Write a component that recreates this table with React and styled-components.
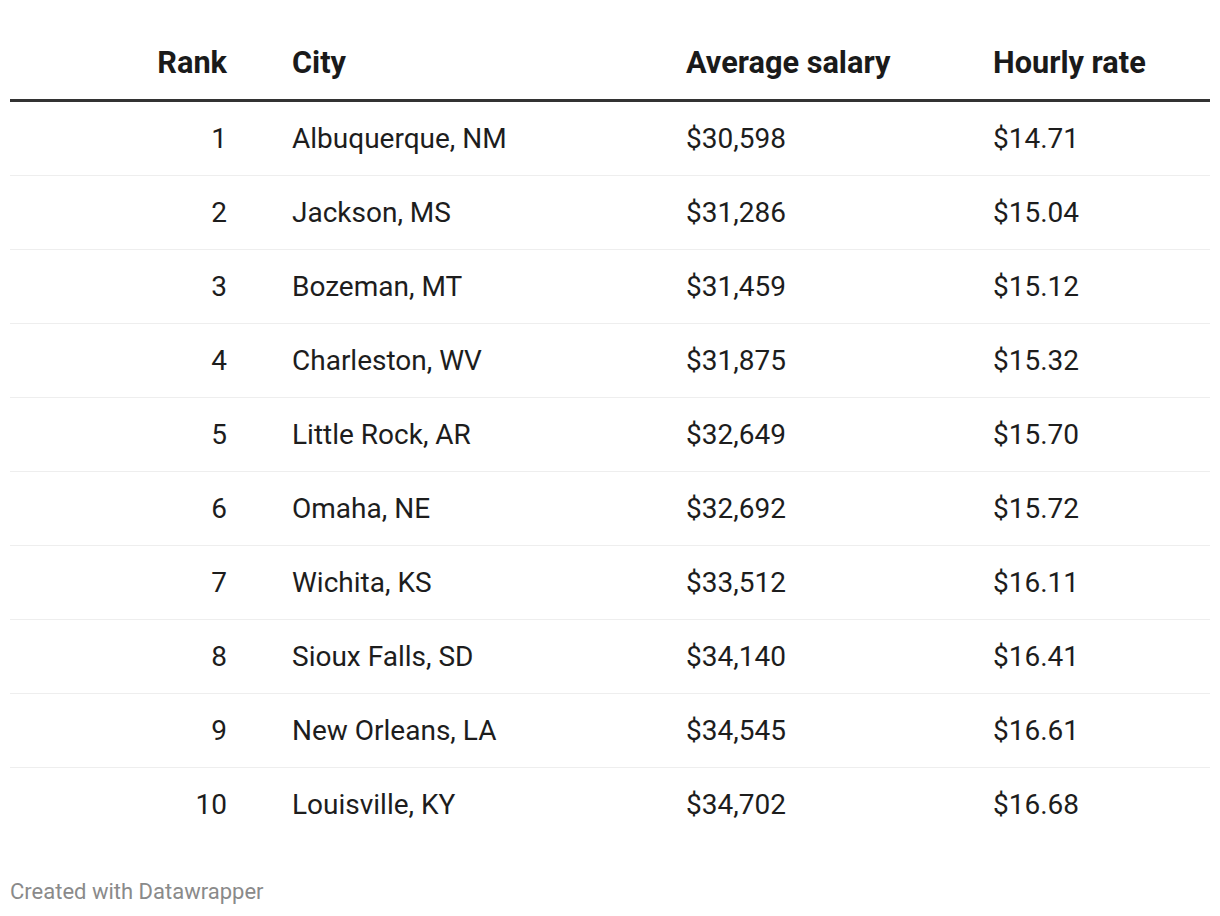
import React from 'react'
import styled, { createGlobalStyle } from 'styled-components'

const GlobalStyle = createGlobalStyle`
  html, body {
    margin: 0;
    padding: 0;
    background: #ffffff;
  }
  body {
    font-family: Roboto, 'Liberation Sans', Arial, sans-serif;
    color: #1d1d1d;
  }
`

const rows = [
  { rank: 1, city: 'Albuquerque, NM', salary: '$30,598', hourly: '$14.71' },
  { rank: 2, city: 'Jackson, MS', salary: '$31,286', hourly: '$15.04' },
  { rank: 3, city: 'Bozeman, MT', salary: '$31,459', hourly: '$15.12' },
  { rank: 4, city: 'Charleston, WV', salary: '$31,875', hourly: '$15.32' },
  { rank: 5, city: 'Little Rock, AR', salary: '$32,649', hourly: '$15.70' },
  { rank: 6, city: 'Omaha, NE', salary: '$32,692', hourly: '$15.72' },
  { rank: 7, city: 'Wichita, KS', salary: '$33,512', hourly: '$16.11' },
  { rank: 8, city: 'Sioux Falls, SD', salary: '$34,140', hourly: '$16.41' },
  { rank: 9, city: 'New Orleans, LA', salary: '$34,545', hourly: '$16.61' },
  { rank: 10, city: 'Louisville, KY', salary: '$34,702', hourly: '$16.68' }
]

const Page = styled.div`
  padding: 0 10px;
  width: 1200px;
`

const Table = styled.div`
  display: flex;
  flex-direction: column;
`

const Row = styled.div`
  display: grid;
  grid-template-columns: 250px 394px 307px 1fr;
  align-items: center;
  box-sizing: border-box;
  height: ${({ $head }) => ($head ? '102px' : '74px')};
  padding-top: ${({ $head }) => ($head ? '27px' : '0')};
  border-bottom: ${({ $head, $last }) =>
    $head ? '3px solid #333333' : $last ? '1px solid transparent' : '1px solid #eeeeee'};
`

const Cell = styled.div`
  padding: ${({ $right }) => ($right ? '0 33px 0 0' : '0 0 0 32px')};
  text-align: ${({ $right }) => ($right ? 'right' : 'left')};
  font-size: ${({ $head }) => ($head ? '30.7px' : '28px')};
  font-weight: ${({ $head }) => ($head ? 700 : 400)};
  line-height: 36px;
  color: ${({ $head }) => ($head ? '#1a1a1a' : '#1d1d1d')};
  white-space: nowrap;
`

const Footer = styled.div`
  margin-top: 37px;
  font-size: 22px;
  line-height: 26px;
  color: #8a8a8a;
`

export default function App() {
  return (
    <Page>
      <GlobalStyle />
      <Table>
        <Row $head>
          <Cell $head $right>Rank</Cell>
          <Cell $head>City</Cell>
          <Cell $head>Average salary</Cell>
          <Cell $head>Hourly rate</Cell>
        </Row>
        {rows.map((r, i) => (
          <Row key={r.rank} $last={i === rows.length - 1}>
            <Cell $right>{r.rank}</Cell>
            <Cell>{r.city}</Cell>
            <Cell>{r.salary}</Cell>
            <Cell>{r.hourly}</Cell>
          </Row>
        ))}
      </Table>
      <Footer>Created with Datawrapper</Footer>
    </Page>
  )
}
